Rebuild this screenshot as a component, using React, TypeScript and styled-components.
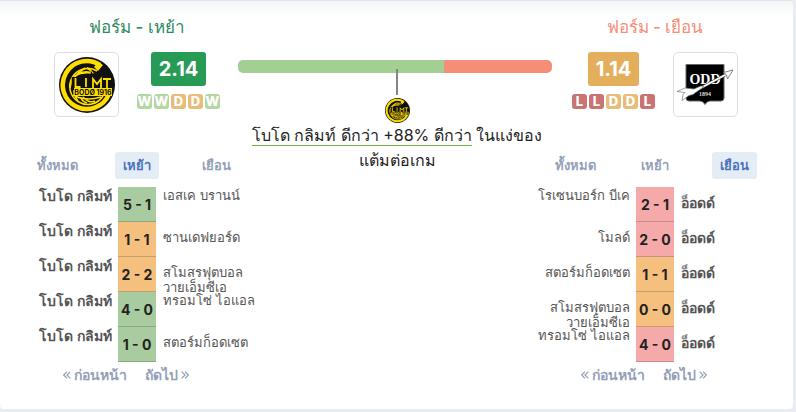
import React from "react";
import styled, { createGlobalStyle } from "styled-components";

const GlobalStyle = createGlobalStyle`
  * { box-sizing: border-box; }
  body {
    margin: 0;
    background: #e9edf1;
    font-family: Inter, sans-serif;
    color: #222;
  }
  button { font-family: inherit; border: 0; background: none; cursor: pointer; }
`;

const Card = styled.main`
  display: grid;
  grid-template-columns: 246px minmax(0, 1fr) 246px;
  margin: 0 3px 4px 0;
  padding: 14px 15px 21px 14px;
  border-top: 1px solid #e2e3eb;
  border-radius: 0 0 4px 4px;
  background: linear-gradient(#f3f4f6, #fafbfb 8px, #fff 17px);
`;

const Side = styled.section`
  display: flex;
  flex-direction: column;
  align-items: center;
`;

const Title = styled.h2<{ $color: string }>`
  margin: 0;
  height: 37px;
  font-size: 17px;
  line-height: 24px;
  font-weight: 500;
  color: ${(p) => p.$color};
`;

const Summary = styled.div<{ $reverse?: boolean }>`
  display: flex;
  flex-direction: ${(p) => (p.$reverse ? "row-reverse" : "row")};
  gap: 18px;
  height: 100px;
`;

const LogoFrame = styled.div`
  display: flex;
  align-items: center;
  justify-content: center;
  width: 65px;
  height: 65px;
  border: 1px solid #dddfe8;
  border-radius: 5px;
  background: #fff;
`;

const Rating = styled.div`
  display: flex;
  flex-direction: column;
  align-items: center;
  gap: 8px;
`;

const Score = styled.strong<{ $bg: string }>`
  padding: 0 8px;
  border-radius: 3px;
  background: ${(p) => p.$bg};
  color: #fff;
  font-size: 20px;
  line-height: 34px;
  font-weight: 700;
`;

const FormRow = styled.div`
  display: flex;
  gap: 2px;
`;

const FormBadge = styled.span<{ $bg: string }>`
  display: flex;
  justify-content: center;
  width: 15px;
  border-radius: 3px;
  background: ${(p) => p.$bg};
  color: #fff;
  font-size: 13px;
  line-height: 15px;
  font-weight: 800;
`;

const Middle = styled.section`
  margin: 45px -20px 0 -22px;
`;

const Bar = styled.div`
  display: flex;
  height: 13px;
  border-radius: 5px;
  overflow: hidden;
`;

const BarPart = styled.div<{ $share: number; $bg: string }>`
  flex: ${(p) => p.$share} 1 0;
  background: ${(p) => p.$bg};
`;

const Callout = styled.div`
  display: flex;
  flex-direction: column;
  align-items: center;
  margin-top: -4px;
  padding-left: 4px;
`;

const Pointer = styled.div`
  width: 2px;
  height: 26px;
  margin-bottom: 3px;
  background: #858585;
  z-index: 1;
`;

const Verdict = styled.p`
  margin: 0;
  text-align: center;
  font-size: 16px;
  line-height: 25px;
`;

const Highlight = styled.span`
  border-bottom: 1px solid #6fb544;
`;

const Tabs = styled.div`
  display: grid;
  grid-template-columns: 87px 72px 87px;
  justify-items: center;
  width: 100%;
`;

const Tab = styled.button<{ $active: boolean }>`
  height: 27px;
  padding: 0 8px;
  border-radius: 3px;
  background: ${(p) => (p.$active ? "#e4ecf6" : "transparent")};
  color: ${(p) => (p.$active ? "#4a72bd" : "#94a0b8")};
  font-size: 13px;
  line-height: 27px;
  font-weight: 600;
`;

const Table = styled.table`
  width: 100%;
  margin-top: 8px;
  table-layout: fixed;
  border-collapse: collapse;
`;

const TeamCell = styled.td<{ $home?: boolean; $bold?: boolean }>`
  padding: ${(p) => (p.$home ? "0 6px 0 0" : "0 0 0 7px")};
  text-align: ${(p) => (p.$home ? "right" : "left")};
  vertical-align: top;
  color: #555;
  font-size: ${(p) => (p.$bold ? 14 : 13)}px;
  font-weight: ${(p) => (p.$bold ? 600 : 400)};
`;

const TeamName = styled.div<{ $raised: boolean }>`
  height: 35px;
  padding-top: ${(p) => (p.$raised ? 1 : 8)}px;
  overflow: hidden;
  line-height: 15px;
`;

const ResultCell = styled.td<{ $bg: string }>`
  width: 38px;
  height: 35px;
  padding: 0;
  background: ${(p) => p.$bg};
  box-shadow: inset 0 -1px 0 rgba(60, 60, 60, 0.25);
  color: #222;
  text-align: center;
  white-space: nowrap;
  font-size: 14px;
  font-weight: 700;
`;

const Pager = styled.nav`
  display: flex;
  gap: 18px;
  align-self: flex-start;
  margin-left: 49px;
`;

const PageButton = styled.button`
  display: flex;
  align-items: center;
  gap: 3px;
  padding: 0;
  color: #94a0b8;
  font-size: 14px;
  line-height: 26px;
  font-weight: 600;
`;

const GREEN = "#a8cb9f";
const ORANGE = "#f5c07d";
const RED = "#f5aaa9";

type Match = { home: string; score: string; away: string; bg: string };

const homeMatches: Match[] = [
  { home: "โบโด กลิมท์", score: "5 - 1", away: "เอสเค บรานน์", bg: GREEN },
  { home: "โบโด กลิมท์", score: "1 - 1", away: "ซานเดฟยอร์ด", bg: ORANGE },
  { home: "โบโด กลิมท์", score: "2 - 2", away: "สโมสรฟุตบอล วายเอ็มซีเอ", bg: ORANGE },
  { home: "โบโด กลิมท์", score: "4 - 0", away: "ทรอมโซ่ ไอแอล", bg: GREEN },
  { home: "โบโด กลิมท์", score: "1 - 0", away: "สตอร์มก็อดเซต", bg: GREEN },
];

const awayMatches: Match[] = [
  { home: "โรเซนบอร์ก บีเค", score: "2 - 1", away: "อ็อดด์", bg: RED },
  { home: "โมลด์", score: "2 - 0", away: "อ็อดด์", bg: RED },
  { home: "สตอร์มก็อดเซต", score: "1 - 1", away: "อ็อดด์", bg: ORANGE },
  { home: "สโมสรฟุตบอล วายเอ็มซีเอ", score: "0 - 0", away: "อ็อดด์", bg: ORANGE },
  { home: "ทรอมโซ่ ไอแอล", score: "4 - 0", away: "อ็อดด์", bg: RED },
];

const isRaised = (name: string) => name.includes(" ") && name.length < 20;

function GlimtLogo({ size }: { size: number }) {
  return (
    <svg width={size} height={size} viewBox="0 0 56 56" role="img" aria-label="Bodø/Glimt">
      <circle cx="28" cy="28" r="28" fill="#111" />
      <path d="M41 8A24 24 0 1 0 50 37" fill="none" stroke="#fd0" strokeWidth="4.500" />
      <path d="M39 5l5 3-5 6-4-4z" fill="#fd0" />
      <g fill="none" stroke="#fd0" strokeWidth="1.600">
        <path d="M38 14A18 18 0 1 0 44 39" />
        <path d="M12 24C18 15 28 12 37 18M15 19c8-4 15-4 22-2M11 31c1-9 7-15 15-20M19 44c-4-5-5-10-4-16M28 11c4 2 6 5 7 8M14 38c9 5 18 5 28 2M24 40c3 4 8 6 12 4M22 40c0 3 3 5 6 6" />
      </g>
      <path d="M15 20v11h8M27 20v11M34 31V21l4 6 4-6v10M44 22h8M48 21v10" fill="none" stroke="#111" strokeWidth="4.500" />
      <path d="M16.500 21v9h5M27 21v9M34 31V22l4 5 4-5v9M44 22h8M48 22v9" fill="none" stroke="#fd0" strokeWidth="1.800" />
      <circle cx="37" cy="18.500" r="3.200" fill="#111" />
      <rect x="15" y="31" width="38" height="8" fill="#fd0" />
      <text x="34" y="37.500" textAnchor="middle" fontSize="7" fontWeight="700" fill="#111" fontFamily="Inter, sans-serif">BODØ 1916</text>
    </svg>
  );
}

function OddLogo() {
  return (
    <svg width="57" height="44" viewBox="0 0 57 44" role="img" aria-label="Odd">
      <path d="M9 1.500h38V35q0 3-3 3H33q-3 0-5 3.500Q26 38 23 38H12q-3 0-3-3z" fill="#000" stroke="#666" strokeWidth="1" />
      <text x="28" y="21" textAnchor="middle" fontSize="14" fontWeight="700" fill="#fff" fontFamily="Liberation Serif, serif">ODD</text>
      <path d="M18 28L48 12" fill="none" stroke="#444" strokeWidth="3" />
      <path d="M18 28L48 12" fill="none" stroke="#fff" strokeWidth="1.600" />
      <path d="M0 28.500L8 25l9 1 7-3 3 .5-7 5-4 3-4 1-7 5 1-6 2-2z" fill="#fff" stroke="#777" strokeWidth=".7" />
      <path d="M56 7l-9.500 2.500 3 2.500 1 4z" fill="#fff" stroke="#666" strokeWidth=".8" />
      <text x="28" y="33" textAnchor="middle" fontSize="6" fontWeight="700" fill="#ddd" fontFamily="Liberation Serif, serif">1894</text>
    </svg>
  );
}

function Chevrons({ right }: { right?: boolean }) {
  return (
    <svg width="8" height="8" viewBox="0 0 8 8" fill="none" stroke="currentColor" strokeWidth="1.200" aria-hidden="true">
      <path d={right ? "M.7 .7L4 4 .7 7.300M4 .7L7.300 4 4 7.300" : "M4 .7L.7 4 4 7.300M7.300 .7L4 4l3.300 3.300"} />
    </svg>
  );
}

const badgeColors: Record<string, string> = { W: "#b3d6a3", D: "#e8bc79", L: "#c97373" };

function Form({ results }: { results: string }) {
  return (
    <FormRow>
      {results.split("").map((r, i) => (
        <FormBadge key={i} $bg={badgeColors[r]}>{r}</FormBadge>
      ))}
    </FormRow>
  );
}

function History({ matches, active, boldHome }: { matches: Match[]; active: number; boldHome?: boolean }) {
  return (
    <>
      <Tabs>
        {["ทั้งหมด", "เหย้า", "เยือน"].map((label, i) => (
          <Tab key={label} $active={i === active} aria-pressed={i === active}>{label}</Tab>
        ))}
      </Tabs>
      <Table>
        <colgroup>
          <col />
          <col width="38" />
          <col />
        </colgroup>
        <tbody>
          {matches.map((m, i) => (
            <tr key={i}>
              <TeamCell $home $bold={boldHome}><TeamName $raised={isRaised(m.home)}>{m.home}</TeamName></TeamCell>
              <ResultCell $bg={m.bg}>{m.score}</ResultCell>
              <TeamCell $bold={!boldHome}><TeamName $raised={isRaised(m.away)}>{m.away}</TeamName></TeamCell>
            </tr>
          ))}
        </tbody>
      </Table>
      <Pager>
        <PageButton><Chevrons />ก่อนหน้า</PageButton>
        <PageButton>ถัดไป<Chevrons right /></PageButton>
      </Pager>
    </>
  );
}

export default function App() {
  return (
    <>
      <GlobalStyle />
      <Card>
        <Side>
          <Title $color="#2d8a5b">ฟอร์ม - เหย้า</Title>
          <Summary>
            <LogoFrame><GlimtLogo size={56} /></LogoFrame>
            <Rating>
              <Score $bg="#279b55">2.14</Score>
              <Form results="WWDDW" />
            </Rating>
          </Summary>
          <History matches={homeMatches} active={1} boldHome />
        </Side>
        <Middle>
          <Bar>
            <BarPart $share={206} $bg="#a3cf93" />
            <BarPart $share={108} $bg="#f58d77" />
          </Bar>
          <Callout>
            <Pointer />
            <GlimtLogo size={25} />
            <Verdict>
              <Highlight>โบโด กลิมท์ ดีกว่า +88% ดีกว่า</Highlight> ในแง่ของ
              <br />
              แต้มต่อเกม
            </Verdict>
          </Callout>
        </Middle>
        <Side>
          <Title $color="#f58d77">ฟอร์ม - เยือน</Title>
          <Summary $reverse>
            <LogoFrame><OddLogo /></LogoFrame>
            <Rating>
              <Score $bg="#e3af5d">1.14</Score>
              <Form results="LLDDL" />
            </Rating>
          </Summary>
          <History matches={awayMatches} active={2} />
        </Side>
      </Card>
    </>
  );
}
